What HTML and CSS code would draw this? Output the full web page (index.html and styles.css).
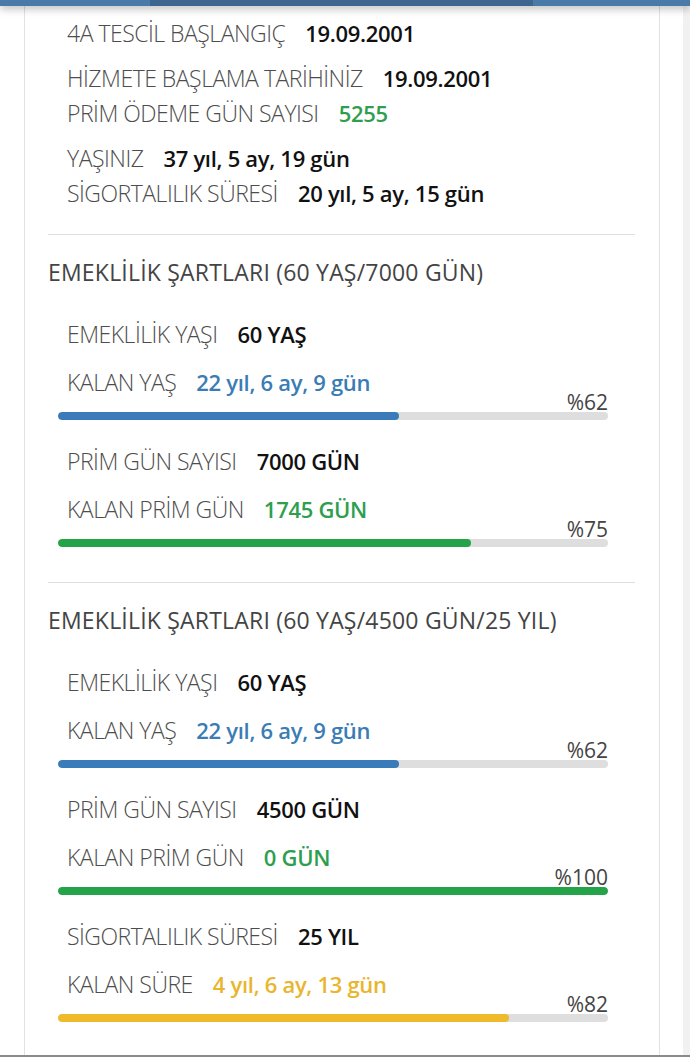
FILE: index.html
```html
<!DOCTYPE html>
<html lang="tr">
<head>
<meta charset="utf-8">
<link rel="stylesheet" href="styles.css">
</head>
<body>
<div class="topbar"><div class="topbar-mid"></div></div>
<div class="page">
  <div class="card">
    <div class="info">
      <div class="group">
        <div class="row"><span class="lbl">4A TESCİL BAŞLANGIÇ</span><span class="val">19.09.2001</span></div>
      </div>
      <div class="group">
        <div class="row"><span class="lbl">HİZMETE BAŞLAMA TARİHİNİZ</span><span class="val">19.09.2001</span></div>
        <div class="row"><span class="lbl">PRİM ÖDEME GÜN SAYISI</span><span class="val green">5255</span></div>
      </div>
      <div class="group">
        <div class="row"><span class="lbl">YAŞINIZ</span><span class="val">37 yıl, 5 ay, 19 gün</span></div>
        <div class="row"><span class="lbl">SİGORTALILIK SÜRESİ</span><span class="val">20 yıl, 5 ay, 15 gün</span></div>
      </div>
    </div>

    <div class="section">
      <h2 class="title">EMEKLİLİK ŞARTLARI (60 YAŞ/7000 GÜN)</h2>
      <div class="item">
        <div class="row"><span class="lbl">EMEKLİLİK YAŞI</span><span class="val">60 YAŞ</span></div>
        <div class="row"><span class="lbl">KALAN YAŞ</span><span class="val blue">22 yıl, 6 ay, 9 gün</span></div>
        <div class="pct">%62</div>
        <div class="bar"><div class="fill fill-blue" style="width:62%"></div></div>
      </div>
      <div class="item">
        <div class="row"><span class="lbl">PRİM GÜN SAYISI</span><span class="val">7000 GÜN</span></div>
        <div class="row"><span class="lbl">KALAN PRİM GÜN</span><span class="val green">1745 GÜN</span></div>
        <div class="pct">%75</div>
        <div class="bar"><div class="fill fill-green" style="width:75%"></div></div>
      </div>
    </div>

    <div class="section">
      <h2 class="title">EMEKLİLİK ŞARTLARI (60 YAŞ/4500 GÜN/25 YIL)</h2>
      <div class="item">
        <div class="row"><span class="lbl">EMEKLİLİK YAŞI</span><span class="val">60 YAŞ</span></div>
        <div class="row"><span class="lbl">KALAN YAŞ</span><span class="val blue">22 yıl, 6 ay, 9 gün</span></div>
        <div class="pct">%62</div>
        <div class="bar"><div class="fill fill-blue" style="width:62%"></div></div>
      </div>
      <div class="item">
        <div class="row"><span class="lbl">PRİM GÜN SAYISI</span><span class="val">4500 GÜN</span></div>
        <div class="row"><span class="lbl">KALAN PRİM GÜN</span><span class="val green">0 GÜN</span></div>
        <div class="pct">%100</div>
        <div class="bar"><div class="fill fill-green" style="width:100%"></div></div>
      </div>
      <div class="item">
        <div class="row"><span class="lbl">SİGORTALILIK SÜRESİ</span><span class="val">25 YIL</span></div>
        <div class="row"><span class="lbl">KALAN SÜRE</span><span class="val yellow">4 yıl, 6 ay, 13 gün</span></div>
        <div class="pct">%82</div>
        <div class="bar"><div class="fill fill-yellow" style="width:82%"></div></div>
      </div>
    </div>
  </div>
  <div class="gutter"></div>
</div>
<div class="bottombar"></div>
</body>
</html>
```
FILE: styles.css
```css
html, body {
  margin: 0;
  padding: 0;
  background: #ffffff;
}
* {
  box-sizing: border-box;
}
body {
  font-family: "Open Sans", "DejaVu Sans", sans-serif;
  width: 690px;
  height: 1057px;
  overflow: hidden;
  position: relative;
}
.topbar {
  position: absolute;
  top: 0;
  left: 0;
  right: 0;
  height: 6px;
  background: #4a7ba8;
  box-shadow: 0 2px 8px rgba(0,0,0,0.35);
  z-index: 2;
}
.topbar-mid {
  margin: 0 157px 0 150px;
  height: 6px;
  background: #3e658f;
}
.page {
  display: flex;
  height: 1057px;
}
.card {
  margin-left: 24px;
  width: 636px;
  border-left: 1px solid #e2e2e2;
  border-right: 1px solid #e2e2e2;
  padding: 0 24px 0 23px;
  flex: none;
}
.gutter {
  margin-left: 23px;
  width: 7px;
  background: #f1f1f1;
  flex: none;
}
.bottombar {
  position: absolute;
  left: 0;
  right: 0;
  bottom: 0;
  height: 2px;
  background: #8a8a8a;
}
.info {
  padding: 16px 0 23px 19px;
  border-bottom: 1px solid #dedede;
}
.group + .group {
  margin-top: 10px;
}
.row {
  display: flex;
  align-items: baseline;
  height: 35px;
  line-height: 35px;
  white-space: nowrap;
}
.lbl {
  color: #4d4d4d;
  font-size: 23px;
  font-weight: 300;
  letter-spacing: -0.5px;
  margin-right: 20px;
}
.val {
  color: #111;
  font-size: 22px;
  font-weight: 600;
  letter-spacing: -0.3px;
}
.green { color: #2e9e4f; }
.blue { color: #3a7cb5; }
.yellow { color: #eab52c; }
.section {
  padding: 20px 0 35px;
}
.section + .section {
  border-top: 1px solid #dedede;
  padding-top: 20px;
}
.title {
  margin: 0 0 28px;
  font-size: 23px;
  font-weight: 400;
  color: #444;
  line-height: 34px;
  height: 34px;
  letter-spacing: 0.2px;
  white-space: nowrap;
}
.item {
  padding: 0 27px 0 10px;
}
.item + .item {
  margin-top: 24px;
}
.item .row {
  padding-left: 9px;
}
.item .row + .row {
  margin-top: 13px;
}
.pct {
  text-align: right;
  font-size: 21px;
  line-height: 20px;
  height: 20px;
  margin-top: -8px;
  color: #444;
  font-weight: 400;
  letter-spacing: 0;
}
.bar {
  height: 8px;
  border-radius: 4px;
  background: #dedede;
  overflow: hidden;
}
.fill {
  height: 100%;
  border-radius: 4px;
}
.fill-blue { background: #3a7cb9; }
.fill-green { background: #24a348; }
.fill-yellow { background: #efba2c; }
```
